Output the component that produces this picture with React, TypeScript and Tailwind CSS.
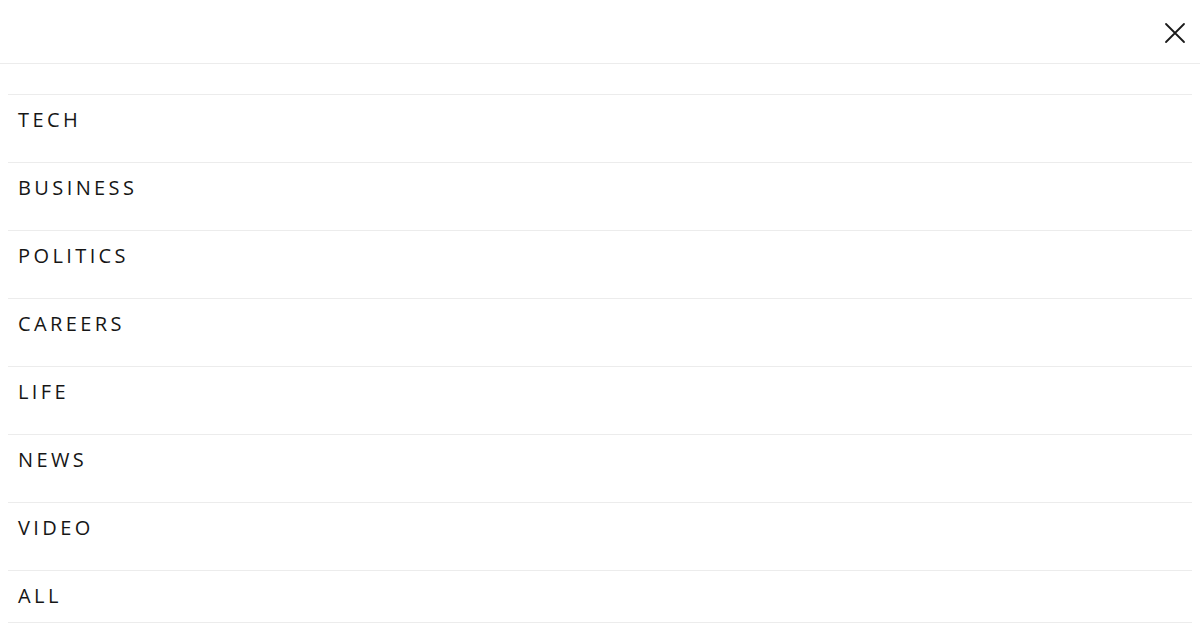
import React from "react";

const items = ["TECH", "BUSINESS", "POLITICS", "CAREERS", "LIFE", "NEWS", "VIDEO"];

export default function App() {
  return (
    <div className="w-[1200px] h-[630px] bg-white overflow-hidden" style={{ fontFamily: "'Open Sans', 'Liberation Sans', sans-serif" }}>
      <div className="h-[64px] border-b border-[#ececec] flex items-start justify-end">
        <button className="mt-[22px] mr-[14px] w-[22px] h-[22px] flex items-center justify-center">
          <svg width="22" height="22" viewBox="0 0 22 22" fill="none" stroke="#1a1a1a" strokeWidth="1.8" strokeLinecap="round">
            <path d="M2 2L20 20M20 2L2 20" />
          </svg>
        </button>
      </div>
      <ul className="px-2 pt-[30px]">
        {items.map((t) => (
          <li key={t} className="h-[68px] border-t border-[#ececec] pl-[10px] pt-[11px]">
            <span className="text-[20px] leading-[28px] font-medium tracking-[3.4px] text-[#161616]">{t}</span>
          </li>
        ))}
        <li className="h-[53px] border-t border-b border-[#ececec] pl-[10px] pt-[11px]">
          <span className="text-[20px] leading-[28px] font-medium tracking-[3.4px] text-[#161616]">ALL</span>
        </li>
      </ul>
    </div>
  );
}
